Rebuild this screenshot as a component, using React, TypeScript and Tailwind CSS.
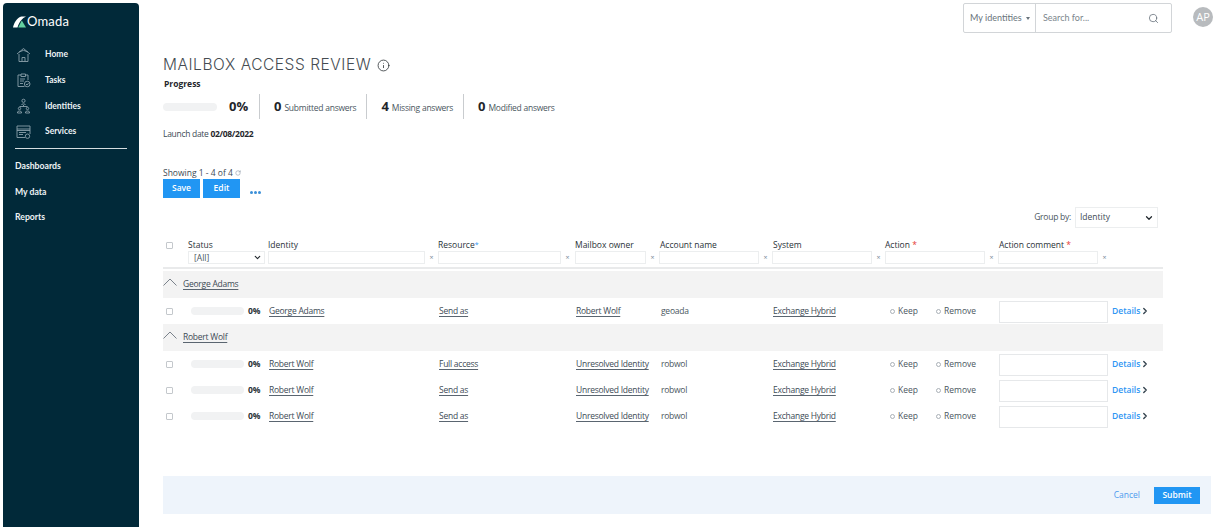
import React from "react";
import { ChevronDown, ChevronRight, Search, Info, RotateCw } from "lucide-react";

const cols = "grid-cols-[25px_80px_170px_137px_84px_113px_113px_113px_113px_52px]";

function Check() {
  return <span className="block w-[7px] h-[7px] ml-[3px] border border-[#c4c8cc] rounded-[1px] bg-white" />;
}
function Bar({ w }: { w: string }) {
  return <span className={`block h-[8px] rounded-full bg-[#f1f2f3] ${w}`} />;
}
function L({ children }: { children: React.ReactNode }) {
  return <span className="underline underline-offset-2 text-[#3d4a55] decoration-[#5a6570]">{children}</span>;
}
function FilterInput({ w }: { w: string }) {
  return (
    <div className="flex items-center h-[13px]">
      <span className={`block h-[13px] border border-[#eceeef] bg-white ${w}`} />
      <span className="w-[13px] text-center text-[7px] leading-none text-[#7a8a9a]">×</span>
    </div>
  );
}
function Row({ who, res, owner, acct }: { who: string; res: string; owner: string; acct: string }) {
  return (
    <div className={`grid ${cols} h-[26px] items-center text-[8.5px] tracking-[-0.25px] text-[#4a5660]`}>
      <Check />
      <div className="flex items-center pl-[3px] tracking-normal">
        <Bar w="w-[53px]" />
        <span className="ml-[4px] font-bold text-[#2a3238]">0%</span>
      </div>
      <div className="pl-px"><L>{who}</L></div>
      <div className="pl-px"><L>{res}</L></div>
      <div className="pl-px"><L>{owner}</L></div>
      <div className="pl-[2px]">{acct}</div>
      <div className="pl-px"><L>Exchange Hybrid</L></div>
      <div className="flex items-center pl-[5px] tracking-normal">
        <span className="w-[5px] h-[5px] rounded-full border border-[#a9b0b6]" />
        <span className="ml-[3px] w-[38px]">Keep</span>
        <span className="w-[5px] h-[5px] rounded-full border border-[#a9b0b6]" />
        <span className="ml-[3px]">Remove</span>
      </div>
      <div className="pl-px pt-[2px]"><span className="block w-[109px] h-[22px] border border-[#e6e8ea] bg-white" /></div>
      <div className="flex items-center pl-px tracking-normal font-semibold text-[#2f96f3] whitespace-nowrap">
        Details<ChevronRight size={10} strokeWidth={3.2} className="text-[#33424d]" />
      </div>
    </div>
  );
}
function Group({ name }: { name: string }) {
  return (
    <div className="flex items-center bg-[#f3f3f3] text-[8.5px] tracking-[-0.25px] h-[27px]">
      <svg width="14" height="8" viewBox="0 0 14 8" fill="none" stroke="#5a6570" strokeWidth="0.8" className="-mt-[5px] shrink-0">
        <path d="M0.5 7.5 7 1l6.5 6.5" />
      </svg>
      <span className="ml-[6px]"><L>{name}</L></span>
    </div>
  );
}
function Stat({ n, t }: { n: string; t: string }) {
  return (
    <div className="flex items-baseline border-l border-[#c9cccf] h-[25px] pt-[3px] pl-[14px] pr-[10px]">
      <span className="text-[13px] font-bold text-[#1f262b]">{n}</span>
      <span className="ml-[3px] text-[8.5px] tracking-[-0.25px] text-[#4a5660]">{t}</span>
    </div>
  );
}
function NavIcon({ children }: { children: React.ReactNode }) {
  return (
    <svg width="15" height="16" viewBox="0 0 15 16" fill="none" stroke="#8ba0aa" strokeWidth="0.9" className="shrink-0">
      {children}
    </svg>
  );
}
function Nav({ icon, label }: { icon: React.ReactNode; label: string }) {
  return (
    <div className="flex items-center h-[25.6px] pl-[13px]">
      <span className="w-[29px]">{icon}</span>
      <span className="text-[8.5px] font-bold text-[#eef3f5]">{label}</span>
    </div>
  );
}

export default function App() {
  return (
    <div className="relative flex w-[1220px] h-[527px] overflow-hidden bg-white font-['Open_Sans',sans-serif]">
      <aside className="w-[136px] ml-[3px] mt-[3px] h-[524px] shrink-0 rounded-t-[4px] bg-[#012939] font-['Lato',sans-serif]">
        <div className="flex items-center h-[36px] pl-[10px] pt-[1px]">
          <svg width="13" height="12" viewBox="0 0 13 12">
            <path d="M0 11.5C1 7 4 1.5 8.5 0.5H13C9.5 2 6 6 4.5 11.5Z" fill="#fff" />
            <path d="M5.2 11.5 8.8 4.5 13 11.5Z" fill="#63cfa0" />
          </svg>
          <span className="ml-[1px] text-[13px] leading-none text-white tracking-[0.2px]">Omada</span>
        </div>
        <div className="pt-[3px]">
          <Nav
            label="Home"
            icon={<NavIcon><path d="M1 7 7.5 1.5 14 7M3 7v7.5h9V7M6 14.5V10.5h3v4M3 5 7.5 3.3 12 5" /></NavIcon>}
          />
          <Nav
            label="Tasks"
            icon={<NavIcon><path d="M9.5 3H12v5M5 3H2v11.5h6.5M5 2h4.5v2.5H5ZM4 7h5M4 9h4M4 11.5h3" /><circle cx="11.2" cy="12" r="2.8" /><path d="M10 12l1 1 1.5-1.8" /></NavIcon>}
          />
          <Nav
            label="Identities"
            icon={<NavIcon><circle cx="7.5" cy="2.8" r="1.6" /><path d="M5.5 7c0-1.5 4-1.5 4 0M7.5 7v1.5M3.5 8.5h8" /><circle cx="3.5" cy="10.5" r="1.2" /><circle cx="11.5" cy="10.5" r="1.2" /><path d="M1.5 15v-1c0-1.3 4-1.3 4 0v1ZM9.5 15v-1c0-1.3 4-1.3 4 0v1Z" /></NavIcon>}
          />
          <Nav
            label="Services"
            icon={<NavIcon><path d="M9 13.5H1V2h13v8M1 5h13M1 6.5h13M3 8.5h7M3 10.5h4" /><circle cx="11.5" cy="12.2" r="2.2" /></NavIcon>}
          />
        </div>
        <div className="mx-[12px] mt-[4px] mb-[3px] h-px bg-[#d5dde0]" />
        <div className="pl-[12px] text-[8.7px] font-bold text-[#eef3f5]">
          <div className="h-[25.8px] flex items-center">Dashboards</div>
          <div className="h-[25.8px] flex items-center">My data</div>
          <div className="h-[25.8px] flex items-center">Reports</div>
        </div>
      </aside>

      <main className="ml-[24px] w-[1057px] flex flex-col">
        <div className="relative h-[33px] shrink-0">
          <div className="absolute top-[3px] left-[800px] flex h-[30px] w-[209px] rounded-[2px] border border-[#d2d5d8] bg-white font-['Lato',sans-serif] text-[9px] text-[#69737b]">
            <div className="flex items-center w-[72px] border-r border-[#d2d5d8] pl-[6px]">
              My identities
              <span className="ml-[4px] w-0 h-0 border-x-[2.5px] border-x-transparent border-t-[3px] border-t-[#69737b]" />
            </div>
            <div className="flex flex-1 items-center justify-between pl-[7px] pr-[12px] text-[#7b858c]">
              Search for...
              <Search size={11} strokeWidth={1.6} className="text-[#5a6570]" />
            </div>
          </div>
          <div className="absolute top-[7px] left-[1030px] flex items-center justify-center w-[20px] h-[20px] rounded-full bg-[#b8bbbe] text-[11px] font-medium text-white">AP</div>
        </div>

        <div className="mt-[23px] flex items-center h-[18px] font-['Inter',sans-serif] text-[15.5px] font-light leading-none tracking-[0.55px] text-[#454c52] whitespace-nowrap">
          MAILBOX ACCESS REVIEW
          <Info size={13} strokeWidth={1.5} className="ml-[6px] text-[#2f3539]" />
        </div>
        <div className="mt-[3px] pl-px text-[8.5px] font-bold leading-[14px] text-[#1f262b]">Progress</div>
        <div className="mt-[3px] flex items-center h-[25px]">
          <Bar w="w-[54px]" />
          <span className="ml-[12px] w-[30px] text-[13px] font-bold text-[#1f262b]">0%</span>
          <Stat n="0" t="Submitted answers" />
          <Stat n="4" t="Missing answers" />
          <Stat n="0" t="Modified answers" />
        </div>
        <div className="mt-[9px] text-[8.5px] tracking-[-0.3px] leading-[12px] text-[#3d4a55]">
          Launch date <b className="text-[#1f262b]">02/08/2022</b>
        </div>

        <div className="mt-[27px] flex items-center text-[8.5px] leading-[12px] text-[#3d4a55]">
          Showing 1 - 4 of 4
          <RotateCw size={6} className="ml-[2px] text-[#7a8a9a]" />
        </div>
        <div className="flex items-center h-[19px] gap-[3px] text-[8.5px] font-semibold text-white">
          <div className="flex h-[19px] w-[37px] items-center justify-center bg-[#2196f3]">Save</div>
          <div className="flex h-[19px] w-[37px] items-center justify-center bg-[#2196f3]">Edit</div>
          <div className="ml-[7px] mt-[8px] flex gap-[1.5px]">
            <span className="w-[2.5px] h-[2.5px] rounded-full bg-[#3b8fd8]" />
            <span className="w-[2.5px] h-[2.5px] rounded-full bg-[#3b8fd8]" />
            <span className="w-[2.5px] h-[2.5px] rounded-full bg-[#3b8fd8]" />
          </div>
        </div>

        <div className="mt-[9px] flex items-center justify-end w-[995px] h-[21px] text-[8.5px] text-[#4a5660]">
          <span className="tracking-[-0.25px]">Group by:</span>
          <div className="ml-[4px] flex items-center justify-between w-[83px] h-[21px] border border-[#eceeef] pl-[4px] pr-[3px] text-[#3d4a55]">
            Identity
            <ChevronDown size={10} strokeWidth={3} className="text-[#22292e]" />
          </div>
        </div>

        <div className="mt-[11px] w-[1000px]">
          <div className={`grid ${cols} text-[8.5px] leading-[11px] text-[#2a3238]`}>
            <div className="row-span-2 pt-[3px]"><Check /></div>
            <div>Status</div>
            <div>Identity</div>
            <div>Resource<span className="text-[#2f96f3] text-[7px] align-top">*</span></div>
            <div>Mailbox owner</div>
            <div className="pl-px">Account name</div>
            <div className="pl-px">System</div>
            <div>Action <span className="text-[#e53935]">*</span></div>
            <div className="pl-px">Action comment <span className="text-[#e53935]">*</span></div>
            <div />
            <div className="pt-px pr-[3px]">
              <div className="flex items-center justify-between h-[13px] border border-[#eceeef] pl-[5px] pr-[2px] text-[#4a5660]">
                [All]
                <ChevronDown size={9} strokeWidth={3} className="text-[#22292e]" />
              </div>
            </div>
            <div className="pt-px"><FilterInput w="w-[157px]" /></div>
            <div className="pt-px"><FilterInput w="w-[123px]" /></div>
            <div className="pt-px"><FilterInput w="w-[71px]" /></div>
            <div className="pt-px"><FilterInput w="w-[100px]" /></div>
            <div className="pt-px"><FilterInput w="w-[100px]" /></div>
            <div className="pt-px"><FilterInput w="w-[100px]" /></div>
            <div className="pt-px"><FilterInput w="w-[100px]" /></div>
            <div />
          </div>
          <div className="mt-[3px] h-[2px] bg-[#e9eaeb]" />
          <div className="mt-[2px]">
            <Group name="George Adams" />
            <Row who="George Adams" res="Send as" owner="Robert Wolf" acct="geoada" />
            <Group name="Robert Wolf" />
            <Row who="Robert Wolf" res="Full access" owner="Unresolved Identity" acct="robwol" />
            <Row who="Robert Wolf" res="Send as" owner="Unresolved Identity" acct="robwol" />
            <Row who="Robert Wolf" res="Send as" owner="Unresolved Identity" acct="robwol" />
          </div>
        </div>

        <div className="mt-[47px] flex items-center justify-end h-[38px] w-[1048px] bg-[#eef4fb] pr-[11px] text-[8.5px]">
          <span className="mr-[14px] text-[#4c9bee]">Cancel</span>
          <div className="flex h-[17px] w-[46px] items-center justify-center bg-[#2196f3] font-semibold text-white">Submit</div>
        </div>
      </main>
    </div>
  );
}
